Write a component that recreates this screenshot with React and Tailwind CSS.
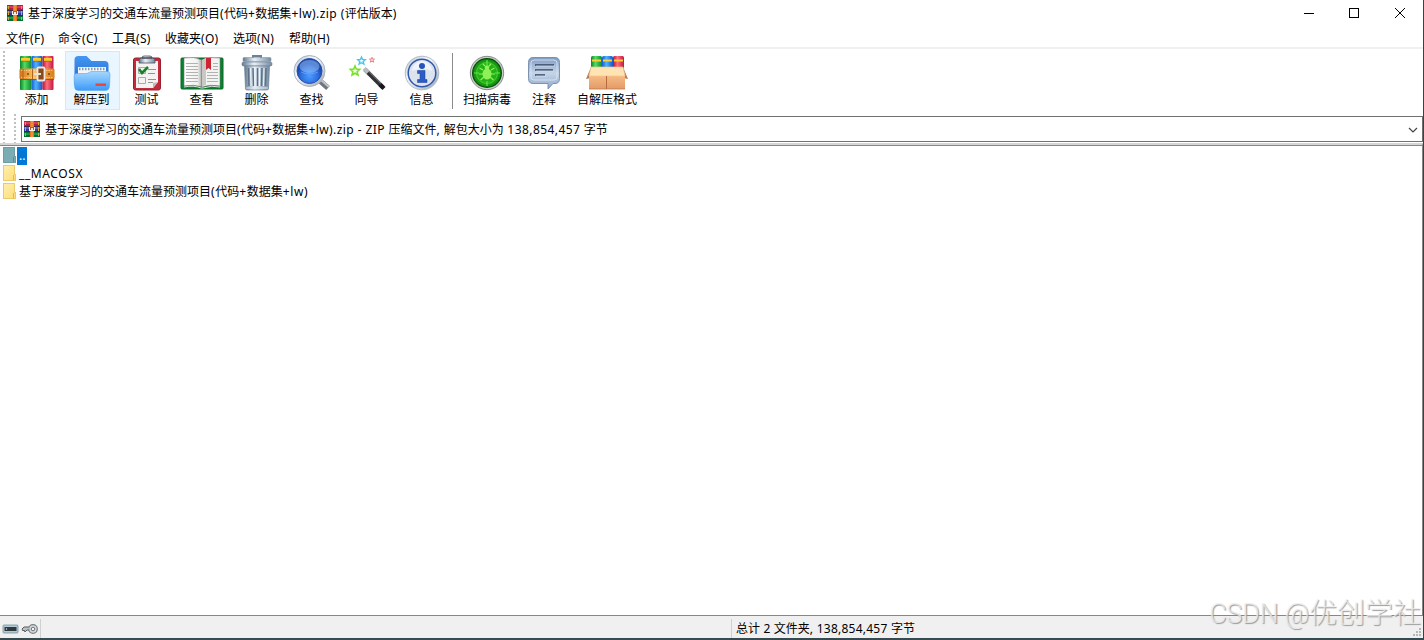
import React from 'react';

const ARCHIVE = '基于深度学习的交通车流量预测项目(代码+数据集+lw)';

const MENUS = [
  { label: '文件(F)', width: 'w-[52px]' },
  { label: '命令(C)', width: 'w-[54px]' },
  { label: '工具(S)', width: 'w-[53px]' },
  { label: '收藏夹(O)', width: 'w-[68px]' },
  { label: '选项(N)', width: 'w-[56px]' },
  { label: '帮助(H)', width: 'w-[52px]' },
];

// Latin runs are set a little wider than the Chinese ones
function Label({ children, tracking = 'tracking-[0.43px]', className = '' }) {
  const runs = children.split(/([\u4e00-\u9fff]+)/).filter(Boolean);
  return (
    <span className={`whitespace-pre ${className}`}>
      {runs.map((run, i) =>
        /[\u4e00-\u9fff]/.test(run) ? run : <span key={i} className={tracking}>{run}</span>
      )}
    </span>
  );
}

// Shared gradients for every icon
function Gradients() {
  const defs = [
    ['gRed', '#b90f35', '#ff6f7c', '#c2183e'],
    ['gGreen', '#0b812b', '#50dd64', '#118535'],
    ['gBlue', '#145dcc', '#50b2ff', '#1557c4'],
    ['gMetal', '#62788f', '#e7f0f8', '#758aa0'],
    ['gStrap', '#cf7318', '#ffc05c', '#d97e1c'],
  ];
  return (
    <svg className="absolute h-0 w-0" aria-hidden="true">
      <defs>
        {defs.map(([id, a, b, c]) => (
          <linearGradient key={id} id={id}>
            <stop offset="0" stopColor={a} />
            <stop offset=".4" stopColor={b} />
            <stop offset="1" stopColor={c} />
          </linearGradient>
        ))}
        <linearGradient id="gFolder" x2="0" y2="1">
          <stop stopColor="#a5d6fd" />
          <stop offset=".6" stopColor="#66b4fb" />
          <stop offset="1" stopColor="#3c98f7" />
        </linearGradient>
        <linearGradient id="gFolderBack" x2="0" y2="1">
          <stop stopColor="#4596f2" />
          <stop offset="1" stopColor="#1c67cc" />
        </linearGradient>
        <linearGradient id="gBubble" x2="0" y2="1">
          <stop stopColor="#7e9bc3" />
          <stop offset=".5" stopColor="#c5d4e8" />
          <stop offset="1" stopColor="#8fa9cb" />
        </linearGradient>
        <linearGradient id="gRing" x2="1" y2="1">
          <stop stopColor="#aab4c0" />
          <stop offset=".35" stopColor="#f5f8fb" />
          <stop offset=".7" stopColor="#cbd2da" />
          <stop offset="1" stopColor="#8c98a6" />
        </linearGradient>
        <linearGradient id="gBox" x2="0" y2="1">
          <stop stopColor="#f8bd84" />
          <stop offset="1" stopColor="#e39a68" />
        </linearGradient>
        <linearGradient id="gPage" x2="1">
          <stop stopColor="#fff" />
          <stop offset=".75" stopColor="#f1f1f0" />
          <stop offset="1" stopColor="#a8a8a6" />
        </linearGradient>
        <radialGradient id="gLens" cy=".7">
          <stop stopColor="#4c9cff" />
          <stop offset=".65" stopColor="#2e70e2" />
          <stop offset="1" stopColor="#1d4bb0" />
        </radialGradient>
        <radialGradient id="gScan">
          <stop stopColor="#25b416" />
          <stop offset=".7" stopColor="#22b018" />
          <stop offset="1" stopColor="#108a0e" />
        </radialGradient>
        <linearGradient id="gYellow" x2="1" y2="1">
          <stop stopColor="#fff0b0" />
          <stop offset="1" stopColor="#fddc74" />
        </linearGradient>
      </defs>
    </svg>
  );
}

function ArchiveIcon() {
  return (
    <svg width="16" height="16" viewBox="0 0 16 16" shapeRendering="crispEdges" className="shrink-0">
      <rect width="16" height="5" fill="#b51d48" />
      <rect y="1" width="16" height="2" fill="#d93a60" />
      <rect y="5" width="16" height="6" fill="#373694" />
      <rect y="6" width="16" height="2" fill="#5a62c0" />
      <rect y="11" width="16" height="5" fill="#086b32" />
      <rect y="12" width="16" height="2" fill="#189a4a" />
      <rect y="5" width="16" height="1" fill="#35284b" />
      <rect y="10" width="16" height="1" fill="#24304c" />
      <path d="M1 1h1v3H1zM1 6h1v4H1zM1 12h1v3H1zM14 1h1v3h-1zM14 6h1v4h-1zM14 12h1v3h-1z" fill="#d9a63d" />
      <rect x="6" width="4" height="16" fill="#e77620" />
      <rect x="7" width="2" height="16" fill="#f08a35" />
      <rect x="5" y="6" width="6" height="4" fill="#b3562a" />
      <path d="M5 6h1v3h4V6h1v4H5zM7 7h2v3H7z" fill="#f6eee1" />
    </svg>
  );
}

function AddIcon() {
  return (
    <svg width="36" height="36" viewBox="0 0 36 36">
      <rect x="1" y="1" width="11.5" height="34" rx="1" fill="url(#gGreen)" />
      <rect x="12.5" y="1" width="11" height="34" rx="1" fill="url(#gBlue)" />
      <rect x="23.5" y="1" width="11" height="34" rx="1" fill="url(#gRed)" />
      <path d="M2 4.500h9M14 4.500h8M25 4.500h8" stroke="#ffcb28" strokeWidth="3" />
      <path d="M2 6.200h9M14 6.200h8M25 6.200h8" stroke="#916718" strokeWidth=".7" />
      <rect x=".5" y="13.500" width="35" height="11" rx="1.500" fill="url(#gStrap)" />
      <path d="M1 24.500h34" stroke="#8d4612" strokeWidth=".8" />
      <path d="M2 15.500h32M2 22.500h32" stroke="#ffe6ab" strokeWidth=".6" strokeDasharray="1.500 1" />
      <path d="M13.500 14v10M4 14v10" stroke="#b0651c" />
      <rect x="18.500" y="12.500" width="7" height="13" rx="1" fill="#8a4a1b" stroke="#ece9e4" strokeWidth="1.800" />
      <path d="M15 19h7" stroke="#e9e3da" strokeWidth="2" />
      <circle cx="9" cy="19" r=".9" fill="#713a14" />
      <circle cx="30" cy="19" r=".9" fill="#713a14" />
    </svg>
  );
}

function ExtractIcon() {
  return (
    <svg width="38" height="36" viewBox="0 0 38 36">
      <path d="M1.500 5q0-4 4-4h8l5 5h13q4 0 4 4v20H1.500z" fill="url(#gFolderBack)" />
      <path d="M5 12h28v8H5z" fill="#f2f6fa" />
      <path d="M6 14h27" stroke="#8d9aae" strokeWidth="2.500" strokeDasharray="1.500 1.500" />
      <path d="M4 18.500h10l4-2h16q3 0 3 3l-.5 12q-.5 4-4 4H5.500q-4 0-4-4L1 21.500q0-3 3-3z" fill="url(#gFolder)" stroke="#5aa8f2" strokeWidth=".6" />
      <rect x="22.500" y="28.500" width="10.500" height="2.500" fill="#f04434" />
    </svg>
  );
}

function TestIcon() {
  return (
    <svg width="30" height="36" viewBox="0 0 30 36">
      <rect x="1.500" y="3" width="27" height="32" rx="2" fill="#c32b3b" stroke="#9a202f" />
      <path d="M4 6h22v21l-5 6H4z" fill="#f4f3f1" />
      <path d="m26 27-5 6v-5z" fill="#bcb9b7" />
      <path d="M7 8V5q0-2 3-2 0-2 2-2h6q2 0 2 2 3 0 3 2v3z" fill="url(#gMetal)" stroke="#4c4e56" strokeWidth=".8" />
      <path d="M10 3h10" stroke="#44464e" strokeWidth="1.500" />
      <path d="M6.500 12.500h7v6h-7zM6.500 22.500h7v6h-7z" fill="none" stroke="#aaa" />
      <path d="m7 14 3 4 6-6" fill="none" stroke="#168127" strokeWidth="2.500" />
      <path d="M16 14.500h8M16 18.500h7M16 24.500h8M16 27.500h5" stroke="#96928f" />
    </svg>
  );
}

function ViewIcon() {
  return (
    <svg width="44" height="34" viewBox="0 0 44 34">
      <rect x="1" y="2" width="42" height="31" rx="1" fill="#0a8230" stroke="#086827" />
      <path d="M4 2Q14 0 22 4v27q-8-3-18-1z" fill="url(#gPage)" stroke="#777" strokeWidth=".6" />
      <path d="M22 4Q30 0 40 2v28q-10-2-18 1z" fill="#f3f3f1" stroke="#777" strokeWidth=".6" />
      <path d="M22 4q3-2 4-2v27q-2 0-4 2z" fill="#c8c8c5" />
      <path d="M6 7.500h12M6 10.500h12M6 13.500h12M6 16.500h12M6 19.500h12M6 22.500h12M6 25.500h12M33 7.500h5M33 10.500h5M27 16.500h11M27 19.500h11M27 22.500h11M27 25.500h11M33 13.500h5" stroke="#b2b2b2" />
      <path d="M26 2h5v12l-2.500-2-2.500 2z" fill="#cc2533" />
      <path d="M4 31q10-2 17 1h2q9-3 17-1" fill="none" stroke="#ddd" />
    </svg>
  );
}

function DeleteIcon() {
  return (
    <svg width="32" height="36" viewBox="0 0 32 36">
      <path d="M12 3V1h8v2" fill="none" stroke="#6c8198" strokeWidth="2" />
      <rect x="2" y="2.500" width="28" height="4" rx="1" fill="url(#gMetal)" stroke="#748aa0" strokeWidth=".5" />
      <rect x="1" y="7" width="30" height="4" rx="1.500" fill="url(#gMetal)" stroke="#6b8096" strokeWidth=".6" />
      <path d="M3.500 11h25l-1 23q0 1-2 1h-19q-2 0-2-1z" fill="url(#gMetal)" stroke="#718499" strokeWidth=".7" />
      <path d="m7.500 13 .5 18M12 13l.5 18M16.500 13v18M21 13l-.5 18M25 13l-.5 18" stroke="#5b7187" strokeWidth="1.500" />
      <path d="m9.500 13 .5 18M14 13v18M18.500 13v18M23 13l-.5 18" stroke="#eef5fa" />
      <path d="M5 33h22" stroke="#dce5ed" />
    </svg>
  );
}

function FindIcon() {
  return (
    <svg width="38" height="38" viewBox="0 0 38 38">
      <path d="m26 26 9 8" stroke="#70767e" strokeWidth="5.500" />
      <path d="m27 25 9 8" stroke="#c3c7cb" strokeWidth="2" />
      <circle cx="16.500" cy="17" r="15.500" fill="url(#gRing)" stroke="#a6b3c2" />
      <circle cx="16.500" cy="17" r="12.500" fill="url(#gLens)" stroke="#2550a8" />
      <ellipse cx="16.500" cy="12.500" rx="10" ry="6.500" fill="#a9d0ff" opacity=".45" />
      <path d="M8 18q8 4 17 0" fill="none" stroke="#8ac0ff" opacity=".5" />
    </svg>
  );
}

function WizardIcon() {
  const star = 'm0-5 1.300 3.100 3.400.3-2.500 2.300.8 3.300L0 2.200-3 4l.8-3.300-2.500-2.300 3.400-.3z';
  return (
    <svg width="38" height="36" viewBox="0 0 38 36">
      <path d="m17 14.500 18 18" stroke="#303236" strokeWidth="4.200" />
      <path d="m18 13.500 18 18" stroke="#878a8d" />
      <path d="m16 13.500 4 4" stroke="#b8bdc0" strokeWidth="4.200" />
      <path d="m32 29.500 4 4" stroke="#17191c" strokeWidth="4.200" />
      <path transform="translate(7 16)" d={star} fill="#e7ffd2" stroke="#7be02a" strokeWidth="1.600" />
      <path transform="translate(13.500 6) scale(.8)" d={star} fill="#e7fbff" stroke="#44c4ee" strokeWidth="1.700" />
      <path transform="translate(24 5) scale(.55)" d={star} fill="#ffd4d5" stroke="#e88687" strokeWidth="1.800" />
    </svg>
  );
}

function InfoIcon() {
  return (
    <svg width="36" height="36" viewBox="0 0 36 36">
      <circle cx="18" cy="18" r="16.800" fill="url(#gRing)" stroke="#b3bdc8" />
      <circle cx="18" cy="18" r="13.800" fill="#dce3ee" stroke="#2f57ab" strokeWidth="1.500" />
      <path d="M8 16a10 10 0 0 1 20 0q-9-4-20 0" fill="#f5f8fc" opacity=".8" />
      <circle cx="18" cy="11" r="3" fill="#2453bb" />
      <path d="M13.500 15.500H21v9h2v3h-9.500v-3H16v-6h-2.500z" fill="#2a5cc8" stroke="#183b8c" strokeWidth=".5" />
    </svg>
  );
}

function ScanIcon() {
  return (
    <svg width="36" height="36" viewBox="0 0 36 36">
      <circle cx="18" cy="18" r="16.700" fill="#c8cdca" stroke="#858e89" />
      <circle cx="18" cy="18" r="15" fill="#064d0c" />
      <circle cx="18" cy="18" r="13.800" fill="url(#gScan)" />
      <circle cx="18" cy="18" r="10.500" fill="none" stroke="#54d63c" strokeWidth=".8" />
      <path d="M18 5v5M18 26v5M5 18h5M26 18h5" stroke="#6be14a" strokeWidth="1.200" />
      <path d="m14 15-3.500-2M14 19h-4M15 22l-3.500 3M22 15l3.500-2M22 19h4M21 22l3.500 3M16 11l-2-2M20 11l2-2" fill="none" stroke="#94f25a" strokeWidth="1.200" />
      <ellipse cx="18" cy="19" rx="4.500" ry="5.500" fill="#8ff058" />
      <circle cx="18" cy="12.500" r="2.300" fill="#8ff058" />
    </svg>
  );
}

function CommentIcon() {
  return (
    <svg width="34" height="34" viewBox="0 0 34 34">
      <path d="M6 1.500h22q4.500 0 4.500 5v16q0 5-4.500 5h-2l-5 5.500v-5.500H6q-4.500 0-4.500-5v-16q0-5 4.500-5z" fill="url(#gBubble)" stroke="#7c92b2" />
      <path d="M7 4h20q3 0 3 3v14q0 3-3 3H7q-3 0-3-3V7q0-3 3-3z" fill="none" stroke="#dfe9f5" strokeWidth=".8" />
      <path d="M8 9h19M8 14h18M8 19h10" stroke="#30435f" strokeWidth="1.600" />
      <path d="M9 10h19M9 15h18M9 20h10" stroke="#e6effa" strokeWidth=".6" />
    </svg>
  );
}

function SfxIcon() {
  return (
    <svg width="42" height="36" viewBox="0 0 42 36">
      <rect x="5" y="1" width="11" height="15" rx="1.500" fill="url(#gGreen)" />
      <rect x="16" y="1" width="11" height="15" rx="1.500" fill="url(#gBlue)" />
      <rect x="27" y="1" width="11" height="15" rx="1.500" fill="url(#gRed)" />
      <path d="M6 5.500h9M17 5.500h9M28 5.500h9" stroke="#ffcf32" strokeWidth="2" />
      <path d="m5 12-5 12 5-1zM37 12l5 12-5-1z" fill="#b57c5c" />
      <path d="M3 20h36v14H3z" fill="url(#gBox)" />
      <path d="M5 12h32l2 9H3z" fill="#ffe3b3" stroke="#f0c58e" strokeWidth=".7" />
      <path d="M20.500 21v13" stroke="#b66a3e" />
      <path d="M3 34h36" stroke="#be764a" strokeWidth=".8" />
    </svg>
  );
}

const TOOLS = [
  { label: '添加', icon: AddIcon },
  { label: '解压到', icon: ExtractIcon, active: true },
  { label: '测试', icon: TestIcon },
  { label: '查看', icon: ViewIcon },
  { label: '删除', icon: DeleteIcon },
  { label: '查找', icon: FindIcon },
  { label: '向导', icon: WizardIcon },
  { label: '信息', icon: InfoIcon },
];

function ToolButton({ label, icon: Icon, active, width = 'w-[55px] pr-[2px]' }) {
  return (
    <button
      className={`flex h-[59px] shrink-0 flex-col items-center border ${width} ${
        active ? 'border-[#d3e9fb] bg-[#e9f5ff]' : 'border-transparent'
      }`}
    >
      <span className="flex h-[41px] shrink-0 items-center justify-center"><Icon /></span>
      <span className="h-4 leading-[13px] whitespace-nowrap">{label}</span>
    </button>
  );
}

function Grip({ className = '' }) {
  return (
    <svg width="3" className={`shrink-0 ${className}`} shapeRendering="crispEdges">
      <defs>
        <pattern id="grip" width="3" height="4" patternUnits="userSpaceOnUse">
          <rect width="2" height="2" fill="#c0c0c0" />
        </pattern>
      </defs>
      <rect width="3" height="100%" fill="url(#grip)" />
    </svg>
  );
}

function FolderIcon({ selected }) {
  return (
    <svg width="14" height="16" viewBox="0 0 14 16" shapeRendering="crispEdges" className="mb-[2px] shrink-0">
      <path d="M0 0h12v9h1v7H0z" fill={selected ? '#7baeb4' : 'url(#gYellow)'} />
      <path d="M.5 15.500V.5h11v9h1v6z" fill="none" stroke={selected ? '#6c9ea3' : '#ecc96c'} />
      <path d="M10.500 15v-5" fill="none" stroke={selected ? '#588e86' : '#e3b84c'} />
    </svg>
  );
}

export default function App() {
  return (
    <div className="flex h-[640px] w-[1424px] flex-col overflow-hidden border-r border-b-2 border-r-[#354350] border-b-[#354b50] bg-white font-['Noto_Sans','Noto_Sans_CJK_SC',sans-serif] text-[12px] leading-[16px] text-black">
      <Gradients />

      {/* Title bar */}
      <header className="flex h-7 shrink-0 items-center pl-[7px]">
        <div className="mb-[2px] flex"><ArchiveIcon /></div>
        <Label className="ml-[5px]">{`${ARCHIVE}.zip (评估版本)`}</Label>
        <div className="mb-[2px] ml-auto flex items-center">
          <svg width="137" height="26" viewBox="0 0 137 26" fill="none" stroke="#000" shapeRendering="crispEdges">
            <path d="M18 13.500h10M63.500 8.500h9v9h-9z" />
            <path d="m109 8 10 10M119 8l-10 10" shapeRendering="auto" />
          </svg>
        </div>
      </header>

      {/* Menu */}
      <nav className="flex h-[21px] shrink-0 items-center border-b-2 border-[#f0f0f0] pt-[3px] pl-[6px]">
        {MENUS.map((menu) => (
          <button key={menu.label} className={`shrink-0 text-left ${menu.width}`}>
            <Label tracking="tracking-[0.3px]">{menu.label}</Label>
          </button>
        ))}
      </nav>

      {/* Toolbar */}
      <div className="flex h-[65px] shrink-0 pt-[2px] pl-[3px]">
        <Grip className="h-[63px]" />
        <div className="ml-1 flex">
          {TOOLS.map((tool) => <ToolButton key={tool.label} {...tool} />)}
        </div>
        <div className="mt-[2px] ml-[2px] h-14 w-px bg-[#8a8a8a]" />
        <ToolButton label="扫描病毒" icon={ScanIcon} width="w-[68px]" />
        <ToolButton label="注释" icon={CommentIcon} width="w-[46px]" />
        <ToolButton label="自解压格式" icon={SfxIcon} width="w-[80px]" />
      </div>

      {/* Address */}
      <div className="flex h-[29px] shrink-0 items-start pl-[3px]">
        <Grip className="h-[29px]" />
        <Grip className="ml-2 h-[29px]" />
        <div className="mt-[2px] ml-1 flex h-[26px] flex-1 items-center border border-[#707070] pr-1 pl-[2px]">
          <ArchiveIcon />
          <Label className="ml-[5px] pt-[2px]">{`${ARCHIVE}.zip - ZIP 压缩文件, 解包大小为 138,854,457 字节`}</Label>
          <svg width="10" height="6" viewBox="0 0 10 6" className="mt-[2px] ml-auto" fill="none" stroke="#444" strokeWidth="1.200">
            <path d="m1 1 4 4 4-4" />
          </svg>
        </div>
      </div>

      {/* File list */}
      <main className="flex-1 border-t-2 border-r border-[#858585] border-t-[#d5d5d5]">
        <div className="h-full border-t border-[#828790] pt-px pl-[3px]">
          <div className="flex h-[18px] items-center">
            <FolderIcon selected />
            <span className="h-[18px] w-[10px] bg-[#0078d7] pl-[2px] leading-[18px] text-white">..</span>
          </div>
          {['__MACOSX', ARCHIVE].map((name) => (
            <div key={name} className="flex h-[18px] items-center">
              <FolderIcon />
              <Label className="ml-[2px]" tracking="tracking-[0.6px]">{name}</Label>
            </div>
          ))}
        </div>
      </main>

      {/* Status bar */}
      <footer className="relative flex h-[23px] shrink-0 items-center border-t border-[#828790] bg-[#f0f0f0] pt-[3px]">
        <svg width="40" height="16" viewBox="0 0 40 16" className="shrink-0">
          <rect x="3" y="4" width="15" height="8" rx="1" fill="#adcbd8" stroke="#788f9a" strokeWidth=".8" />
          <rect x="4.500" y="6" width="12" height="4" fill="#30383c" />
          <circle cx="6.500" cy="8" r=".7" fill="#d5dee2" />
          <circle cx="33" cy="8" r="4.300" fill="#d6dbde" stroke="#7a7f83" strokeWidth="1.200" />
          <circle cx="33" cy="8" r="1.800" fill="#f4f4f4" stroke="#6d7276" />
          <path d="M29 6h-5l-2 2 1 2 1-1 1 2 2-2h2" fill="#bcc1c4" stroke="#565c60" />
        </svg>
        <div className="h-[19px] w-px bg-[#d0d0d0]" />
        <div className="ml-[690px] h-[19px] w-px bg-[#d0d0d0]" />
        <Label className="ml-1 pt-px" tracking="tracking-[0.24px]">总计 2 文件夹, 138,854,457 字节</Label>
        <svg width="10" height="10" className="absolute right-[1px] bottom-[1px]" fill="#b7b7b7">
          <path d="M7 1h2v2H7zM4 4h2v2H4zM7 4h2v2H7zM1 7h2v2H1zM4 7h2v2H4zM7 7h2v2H7z" />
        </svg>
        <span className="absolute right-[2px] bottom-[3px] font-['Noto_Sans_CJK_SC',sans-serif] text-[28px] leading-[42px] font-light whitespace-nowrap text-[#eeeeee]/80 [text-shadow:1px_1px_1px_#999]">
          <span className="font-['Roboto',sans-serif] text-[27px] tracking-[-0.3px]">CSDN @</span>优创学社
        </span>
      </footer>
    </div>
  );
}
